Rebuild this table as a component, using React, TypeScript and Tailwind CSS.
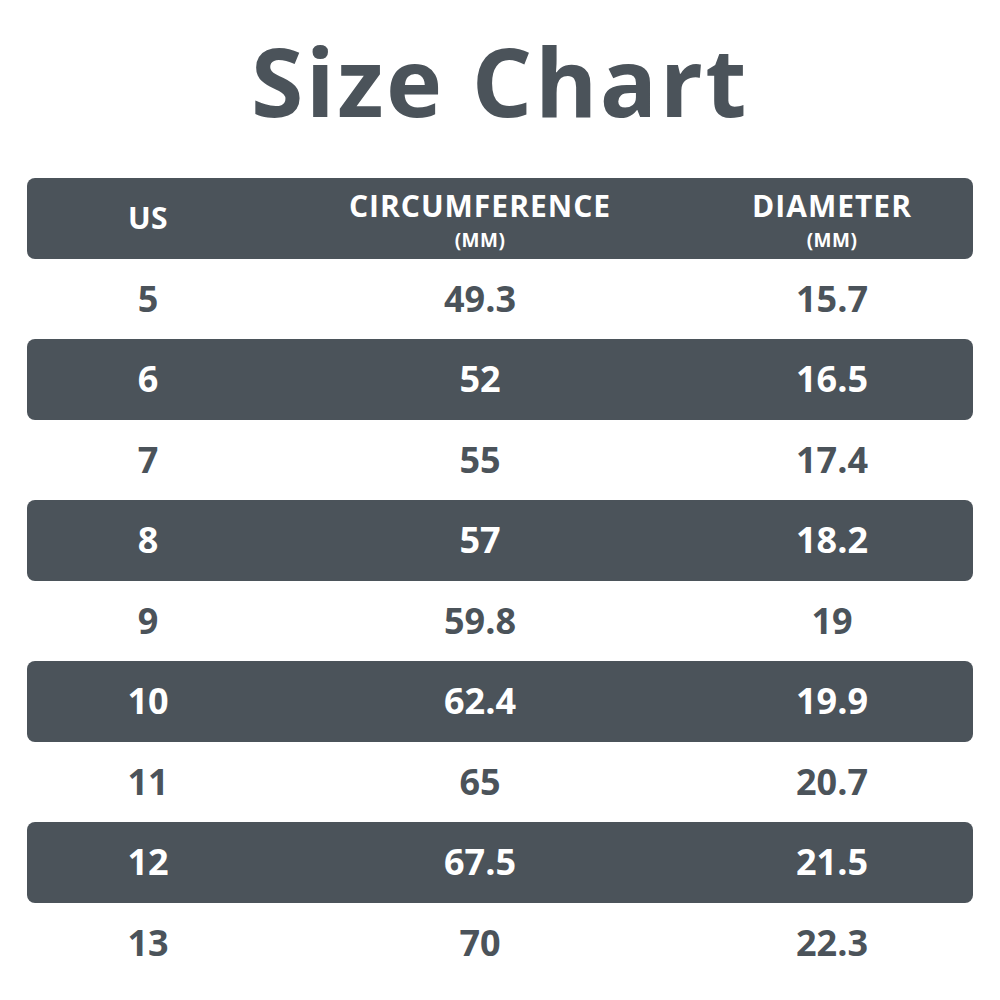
import React from 'react';

interface SizeRow {
  us: string;
  circumference: string;
  diameter: string;
}

const rows: SizeRow[] = [
  { us: '5', circumference: '49.3', diameter: '15.7' },
  { us: '6', circumference: '52', diameter: '16.5' },
  { us: '7', circumference: '55', diameter: '17.4' },
  { us: '8', circumference: '57', diameter: '18.2' },
  { us: '9', circumference: '59.8', diameter: '19' },
  { us: '10', circumference: '62.4', diameter: '19.9' },
  { us: '11', circumference: '65', diameter: '20.7' },
  { us: '12', circumference: '67.5', diameter: '21.5' },
  { us: '13', circumference: '70', diameter: '22.3' },
];

const gridCols = 'grid grid-cols-[242px_422px_282px] items-center';

export default function App() {
  return (
    <div
      className="w-[1000px] h-[1000px] bg-white text-[#4b535a] flex flex-col items-center"
      style={{ fontFamily: '"Open Sans", "Liberation Sans", sans-serif' }}
    >
      <h1 className="mt-[18px] h-[160px] text-[95px] font-bold leading-[124px] tracking-[2.5px]">
        Size Chart
      </h1>

      <div className="w-[946px]">
        {/* Header */}
        <div className={`${gridCols} h-[80.5px] bg-[#4b535a] rounded-lg text-white text-center`}>
          <div className="text-[30px] font-bold leading-none tracking-[0.5px]">US</div>
          <div className="flex flex-col items-center pt-[4px]">
            <span className="text-[30px] font-bold leading-[36px] tracking-[1px]">CIRCUMFERENCE</span>
            <span className="mt-[3px] text-[19px] font-bold leading-[26px] tracking-[0.5px]">(MM)</span>
          </div>
          <div className="flex flex-col items-center pt-[4px]">
            <span className="text-[30px] font-bold leading-[36px] tracking-[1px]">DIAMETER</span>
            <span className="mt-[3px] text-[19px] font-bold leading-[26px] tracking-[0.5px]">(MM)</span>
          </div>
        </div>

        {/* Rows */}
        {rows.map((row, i) => {
          const dark = i % 2 === 1;
          return (
            <div
              key={row.us}
              className={`${gridCols} h-[80.5px] rounded-lg text-center text-[36px] font-bold leading-none ${
                dark ? 'bg-[#4b535a] text-white' : 'text-[#4b535a]'
              }`}
            >
              <div>{row.us}</div>
              <div>{row.circumference}</div>
              <div>{row.diameter}</div>
            </div>
          );
        })}
      </div>
    </div>
  );
}
